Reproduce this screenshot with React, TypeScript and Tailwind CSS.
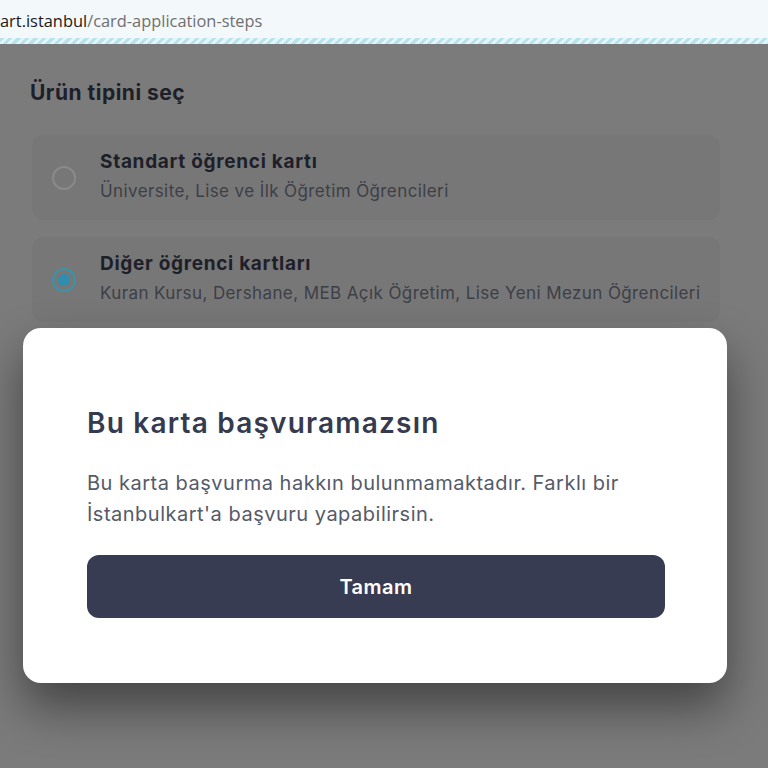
import React from "react";

const Radio = ({ checked }: { checked?: boolean }) =>
  checked ? (
    <span className="flex h-[24px] w-[24px] shrink-0 items-center justify-center rounded-full border-[2px] border-[#3b93aa]">
      <span className="h-[12px] w-[12px] rounded-full bg-[#2f8db0]" />
    </span>
  ) : (
    <span className="h-[24px] w-[24px] shrink-0 rounded-full border-[2px] border-[#8a8a8a]" />
  );

const options = [
  {
    title: "Standart öğrenci kartı",
    desc: "Üniversite, Lise ve İlk Öğretim Öğrencileri",
    checked: false,
  },
  {
    title: "Diğer öğrenci kartları",
    desc: "Kuran Kursu, Dershane, MEB Açık Öğretim, Lise Yeni Mezun Öğrencileri",
    checked: true,
  },
];

export default function App() {
  return (
    <div className="relative flex h-[768px] w-[768px] flex-col overflow-hidden font-['Inter',sans-serif]">
      {/* address bar */}
      <div className="flex h-[38px] shrink-0 items-center bg-[#f3f8fb] pt-[4px] font-['Open_Sans',sans-serif] text-[16.4px]">
        <span className="text-[#1a1a1a]">art.istanbul</span>
        <span className="text-[#6f6f6f]">/card-application-steps</span>
      </div>
      <div className="h-[6px] shrink-0 bg-[repeating-linear-gradient(135deg,#b9e3ec_0px,#b9e3ec_3px,#e4f5f9_3px,#e4f5f9_6px)]" />

      {/* page behind the dialog */}
      <div className="flex-1 bg-[#7b7b7b] px-[30px] pt-[37px]">
        <h2 className="text-[21px] font-bold leading-[24px] tracking-[0.5px] text-[#1e2029]">Ürün tipini seç</h2>
        <div className="mt-[30px] flex w-[690px] flex-col gap-[17px] pl-[2px]">
          {options.map((o) => (
            <div key={o.title} className="flex h-[85px] items-center gap-[24px] rounded-[12px] bg-[#777777] pl-[20px]">
              <Radio checked={o.checked} />
              <div className="mb-[3px] flex flex-col">
                <span className="text-[19px] font-bold leading-[26px] tracking-[0.7px] text-[#1e2029]">{o.title}</span>
                <span className="mt-[4px] text-[17px] leading-[24px] tracking-[0.4px] text-[#3d3f47]">{o.desc}</span>
              </div>
            </div>
          ))}
        </div>
      </div>

      {/* dialog */}
      <div className="absolute left-[23px] top-[328px] h-[355px] w-[704px] rounded-[18px] bg-white pl-[64px] pr-[62px] pt-[77px] shadow-[0_24px_48px_rgba(0,0,0,0.45)]">
        <h1 className="text-[28px] font-semibold leading-[36px] tracking-[1.2px] text-[#353a4f]">Bu karta başvuramazsın</h1>
        <p className="mt-[27px] text-[20px] leading-[31px] tracking-[0.5px] text-[#555a6a]">
          Bu karta başvurma hakkın bulunmamaktadır. Farklı bir
          <br />
          İstanbulkart'a başvuru yapabilirsin.
        </p>
        <button
          type="button"
          className="mt-[25px] flex h-[63px] w-full items-center justify-center rounded-[12px] bg-[#383c52] text-[20px] font-semibold tracking-[0.5px] text-white"
        >
          Tamam
        </button>
      </div>
    </div>
  );
}
